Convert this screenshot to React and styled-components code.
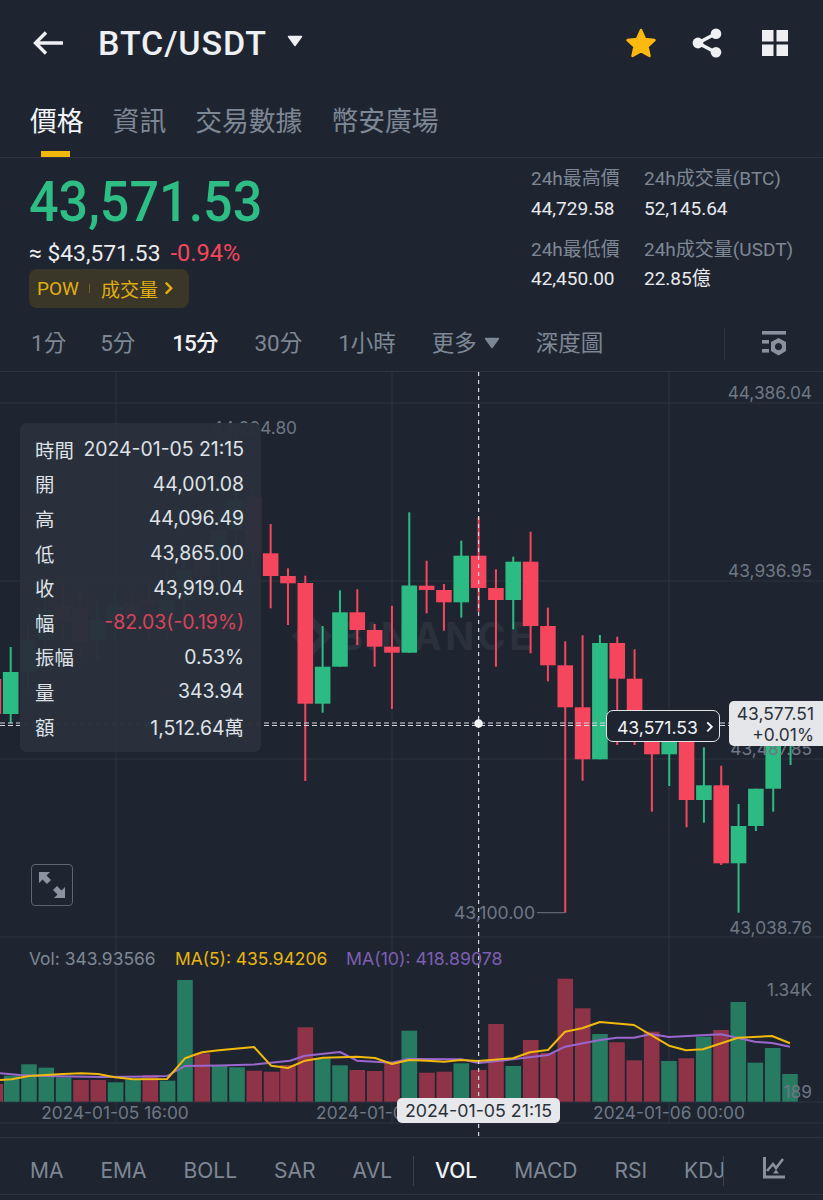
import React from 'react';
import styled, { createGlobalStyle } from 'styled-components';

const UI_FONT = '"Roboto", "Noto Sans CJK TC", sans-serif';
const CHART_FONT = '"Inter", "Noto Sans CJK TC", sans-serif';
const BG = '#1e2530';
const LINE = '#2d343f';
const GREY = '#7e8795';
const GREEN = '#2ebd85';
const RED = '#f6465d';
const YELLOW = '#f0b90b';

const Global = createGlobalStyle`
  html, body { margin: 0; padding: 0; background: ${BG}; }
  * { box-sizing: border-box; }
`;

const Page = styled.div`
  width: 823px;
  height: 1200px;
  background: ${BG};
  color: #eaecef;
  font-family: ${UI_FONT};
  display: flex;
  flex-direction: column;
  overflow: hidden;
`;

const Header = styled.header`
  height: 85px;
  flex: none;
  display: flex;
  align-items: center;
  padding: 0 35px 0 33px;
`;
const Title = styled.h1`
  margin: 0 0 0 35px;
  font-size: 34px;
  font-weight: 500;
  letter-spacing: 0.9px;
  color: #eef0f4;
  white-space: nowrap;
`;
const TitleCaret = styled.span`
  display: flex;
  margin-left: 20px;
  margin-bottom: 4px;
`;
const HeaderActions = styled.div`
  margin-left: auto;
  display: flex;
  align-items: center;
  gap: 40px;
`;
const StarSvg = styled.svg`
  margin-right: -5px;
`;

const Tabs = styled.nav`
  height: 73px;
  flex: none;
  display: flex;
  gap: 29px;
  padding: 18px 0 0 30px;
  border-bottom: 1px solid ${LINE};
`;
const Tab = styled.div`
  position: relative;
  font-size: 26.8px;
  line-height: 38px;
  color: ${(p) => (p.$active ? '#f2f3f5' : GREY)};
  white-space: nowrap;
  ${(p) =>
    p.$active &&
    `&::after {
      content: '';
      position: absolute;
      left: 11px;
      bottom: 0;
      width: 29px;
      height: 6px;
      background: ${YELLOW};
    }`}
`;

const Ticker = styled.section`
  height: 169px;
  flex: none;
  display: flex;
  justify-content: space-between;
`;
const TickerLeft = styled.div`
  padding: 16px 0 0 29px;
  display: flex;
  flex-direction: column;
  align-items: flex-start;
`;
const Price = styled.div`
  font-size: 56px;
  line-height: 56px;
  font-weight: 500;
  color: ${GREEN};
  transform: scaleX(0.93);
  transform-origin: left center;
  white-space: nowrap;
`;
const Fiat = styled.div`
  margin-top: 9px;
  font-size: 22.8px;
  line-height: 28px;
  color: #eaecef;
  white-space: nowrap;
  span {
    color: ${RED};
    margin-left: 10px;
    font-size: 23.6px;
  }
`;
const Badge = styled.div`
  margin-top: 1px;
  width: 160px;
  height: 39px;
  border-radius: 8px;
  background: #3a3628;
  color: #e0ae12;
  font-size: 19px;
  display: flex;
  align-items: center;
  padding-left: 8px;
`;
const BadgeDivider = styled.i`
  width: 1px;
  height: 9px;
  margin: 0 10.5px;
  background: #6f6532;
`;
const BadgeChevron = styled.span`
  display: flex;
  margin-left: 5px;
`;
const StatGrid = styled.div`
  width: 292px;
  padding-top: 7px;
  display: grid;
  grid-template-columns: 113px 1fr;
  grid-auto-rows: 30px;
  white-space: nowrap;
`;
const StatLabel = styled.div`
  font-size: 19px;
  line-height: 28px;
  color: ${GREY};
  ${(p) => p.$lower && 'margin-top: 11px;'}
`;
const StatValue = styled.div`
  font-size: 19px;
  line-height: 28px;
  color: #e8eaee;
  ${(p) => p.$lower && 'margin-top: 10px;'}
`;

const Ranges = styled.div`
  height: 45px;
  flex: none;
  display: flex;
  align-items: center;
  gap: 36px;
  padding: 0 37px 12px 31px;
  border-bottom: 1px solid ${LINE};
`;
const RangeItem = styled.div`
  font-size: 22.5px;
  line-height: 30px;
  color: ${(p) => (p.$active ? '#f2f3f5' : GREY)};
  font-weight: ${(p) => (p.$active ? 500 : 400)};
  letter-spacing: ${(p) => (p.$active ? '-1px' : '0')};
  margin: ${(p) => (p.$active ? '0 1px' : p.$first ? '0 -2px 0 0' : '0')};
  display: flex;
  align-items: center;
  gap: 7px;
  white-space: nowrap;
`;
const RangeTools = styled.div`
  margin: 1px 0 0 auto;
  display: flex;
  align-items: center;
  gap: 37px;
`;
const VDivider = styled.i`
  width: 1px;
  height: 32px;
  background: ${LINE};
  flex: none;
`;

const Chart = styled.div`
  position: relative;
  height: 765px;
  flex: none;
`;
const ChartSvg = styled.svg`
  display: block;
  width: 823px;
  height: 765px;
  text {
    font-family: ${CHART_FONT};
  }
`;
const Tooltip = styled.div`
  position: absolute;
  left: 20px;
  top: 51px;
  width: 241px;
  height: 329px;
  border-radius: 7px;
  background: rgba(42, 49, 60, 0.98);
  padding: 9px 17px 0 15px;
  font-family: ${CHART_FONT};
  font-size: 19.4px;
`;
const TipRow = styled.div`
  height: 34.6px;
  display: flex;
  justify-content: space-between;
  align-items: center;
  color: #dfe2e7;
  white-space: nowrap;
`;
const TipValue = styled.span`
  color: ${(p) => (p.$red ? '#d9435b' : '#dfe2e7')};
`;
const PriceTag = styled.div`
  position: absolute;
  left: 606px;
  top: 338px;
  width: 114px;
  height: 32px;
  border: 1px solid #e3e5e8;
  border-radius: 7px;
  background: #1e2530;
  color: #f2f3f5;
  font-family: ${CHART_FONT};
  font-size: 17.6px;
  display: flex;
  align-items: center;
  justify-content: space-between;
  padding: 2px 5px 0 10px;
`;
const AxisTag = styled.div`
  position: absolute;
  left: 729px;
  top: 329px;
  width: 94px;
  height: 45px;
  border-radius: 5px 0 0 5px;
  background: #e4e6ea;
  color: #2b3139;
  font-family: ${CHART_FONT};
  font-size: 17.4px;
  line-height: 21px;
  text-align: right;
  padding: 2px 9px 0 0;
`;
const TimeTag = styled.div`
  position: absolute;
  left: 397px;
  top: 726px;
  width: 163px;
  height: 25px;
  border-radius: 5px;
  background: #e6e8ec;
  color: #2b3139;
  font-family: ${CHART_FONT};
  font-size: 17.8px;
  line-height: 26px;
  text-align: center;
  white-space: nowrap;
`;
const ExpandButton = styled.div`
  position: absolute;
  left: 31px;
  top: 492px;
  width: 42px;
  height: 42px;
  border: 1px solid #5e6673;
  border-radius: 4px;
  display: flex;
  align-items: center;
  justify-content: center;
`;

const Indicators = styled.div`
  height: 58px;
  flex: none;
  border-top: 1px solid ${LINE};
  border-bottom: 1px solid ${LINE};
  display: flex;
  align-items: center;
  padding: 10px 0 0 30px;
  font-family: ${CHART_FONT};
`;
const IndicatorScroll = styled.div`
  width: 694px;
  flex: none;
  display: flex;
  align-items: center;
  gap: 37px;
  overflow: hidden;
  height: 30px;
  border-right: 1px solid #3a414d;
`;
const Indicator = styled.div`
  font-size: 21px;
  line-height: 30px;
  color: ${(p) => (p.$active ? '#f2f3f5' : GREY)};
  font-weight: ${(p) => (p.$active ? 500 : 400)};
  white-space: nowrap;
`;
const IndicatorDivider = styled.i`
  width: 1px;
  height: 30px;
  flex: none;
  margin: 0 -16px;
  background: #3a414d;
`;
const IndicatorTool = styled.div`
  margin: -6px 0 0 39px;
  display: flex;
`;

const X0 = 478.6;
const P = 17.33;
const cx = (k) => X0 + P * k;
// [index, bodyTop, bodyBottom, wickTop, wickBottom, up?]
const CANDLES = [
  [-28, 679, 714, 665, 728, 0],
  [-27, 672, 714, 647, 723, 1],
  [-26, 640, 672, 625, 690, 1],
  [-25, 610, 640, 590, 655, 1],
  [-24, 606, 622, 585, 640, 0],
  [-23, 607, 642, 590, 660, 0],
  [-22, 620, 640, 600, 660, 1],
  [-21, 605, 622, 592, 645, 1],
  [-20, 603, 616, 590, 630, 0],
  [-19, 600, 606, 585, 640, 0],
  [-18, 600, 620, 570, 640, 1],
  [-17, 570, 600, 550, 620, 1],
  [-16, 560, 575, 540, 600, 0],
  [-15, 530, 560, 515, 580, 1],
  [-14, 500, 530, 490, 560, 1],
  [-13, 497, 553, 490, 570, 0],
  [-12, 553.3, 576, 524, 608.3, 0],
  [-11, 576, 583.3, 568.3, 625, 0],
  [-10, 583, 703.7, 575.7, 781, 0],
  [-9, 666.7, 703.7, 626, 712.7, 1],
  [-8, 612.3, 666.7, 590.3, 666.7, 1],
  [-7, 612.3, 630, 589.3, 645, 0],
  [-6, 630, 646.7, 624, 666.7, 0],
  [-5, 646.7, 652.7, 605.7, 709, 0],
  [-4, 585.5, 652.7, 512.3, 652.7, 1],
  [-3, 585.7, 590, 560.7, 613.3, 0],
  [-2, 590, 602.3, 584, 630.7, 0],
  [-1, 555.7, 602.3, 540.7, 617.7, 1],
  [0, 555.7, 588, 517.3, 611.7, 0],
  [1, 588, 600, 569.3, 666.7, 0],
  [2, 561.7, 600, 556.7, 629.3, 1],
  [3, 561.7, 626, 531.7, 653.3, 0],
  [4, 626, 665.3, 607.7, 681.3, 0],
  [5, 665.3, 707.3, 641.3, 912.7, 0],
  [6, 707.3, 759.3, 635.3, 780.7, 0],
  [7, 643, 759.3, 635, 759.3, 1],
  [8, 643, 678.7, 636.7, 745, 0],
  [9, 678.7, 735, 649.3, 745, 0],
  [10, 725, 754.3, 715, 811.7, 0],
  [11, 725, 754.3, 715, 786, 1],
  [12, 725, 800, 715, 827.3, 0],
  [13, 785.3, 800, 747.3, 822.7, 1],
  [14, 785.3, 863.3, 765.7, 865, 0],
  [15, 826, 863.3, 804, 912.7, 1],
  [16, 788.7, 826, 788.7, 831, 1],
  [17, 745, 788.7, 735, 811.7, 1],
  [18, 735, 745, 735, 765, 1],
];

// [centre x, top of bar, up?]
const VOLUMES = [
  [-4.7, 1084, 0], [11.7, 1075.7, 1], [29, 1064.3, 1], [46.3, 1067.7, 1], [63.6, 1077.3, 1],
  [81, 1080, 0], [98.3, 1080, 0], [115.6, 1082.3, 1], [133, 1079.3, 1], [150.3, 1075, 0],
  [167.6, 1080.7, 1], [185, 980, 1], [202.3, 1053.3, 0], [219.6, 1066, 1], [237, 1067.3, 1],
  [254.3, 1070.7, 0], [271.6, 1071.7, 0], [288, 1065, 0], [305.3, 1027.3, 0], [322.7, 1058.3, 1],
  [340, 1065.3, 1], [357.3, 1070, 0], [374.7, 1071, 0], [392, 1061.7, 0], [409.3, 1030.7, 1],
  [427, 1072.7, 0], [444.3, 1071.7, 0], [461.3, 1063.3, 1], [478.7, 1070, 0], [496, 1024, 0],
  [513.3, 1066, 1], [530.7, 1040, 0], [548, 1053, 0], [565.3, 978.7, 0], [582.7, 1008.3, 0],
  [600, 1034, 1], [617, 1042.3, 0], [634.3, 1060.3, 0], [651.7, 1031.7, 0], [669, 1061, 1],
  [686.3, 1058.3, 0], [703.7, 1036.7, 1], [721, 1030, 0], [738.3, 1002, 1], [755.3, 1062.7, 1],
  [772.7, 1048, 1], [790, 1074, 1],
];

const PURPLE =
  '0,1073.3 20,1075 46,1076 100,1077 150,1076.5 167,1076 185,1066 220,1065.5 254,1064.5 290,1060.7 305,1055.7 340,1052 357,1060.7 392,1062.7 409,1059 461,1059.3 478.7,1063 513,1059.3 548,1055 565,1046.7 600,1040 617,1037.7 634,1037.7 651,1034 669,1037 721,1034.3 755,1041.7 772,1043 790,1046.7';
const ORANGE =
  '0,1080 11.7,1079.3 29,1076 63,1074 81,1073.3 98,1074 115,1077.3 133,1079.3 167,1079 185,1058.3 202,1052.3 219,1050.3 254,1047 271,1065.7 288,1068 305,1060.7 323,1057.7 357,1056.7 375,1058 392,1064 409,1060 427,1060.7 444,1061.7 461,1060 478,1061 513,1058.3 530,1052.3 548,1050 565,1031.7 582,1028.3 600,1022 634,1025 669,1045.7 686,1050.3 703,1049.3 738,1037.7 772,1036 790,1043.3';

const StarIcon = () => (
  <StarSvg width="32" height="30" viewBox="0 0 32 30">
    <path
      d="M16 2 L20 11 L29.5 12 L22.5 18.5 L24.5 28 L16 23.2 L7.5 28 L9.5 18.5 L2.5 12 L12 11 Z"
      fill="#fdb90f"
      stroke="#fdb90f"
      strokeWidth="2.5"
      strokeLinejoin="round"
    />
  </StarSvg>
);
const ShareIcon = () => (
  <svg width="30" height="30" viewBox="0 0 30 30">
    <path d="M6 15 L24 5.5 M6 15 L24 24.5" stroke="#eef0f4" strokeWidth="3.6" fill="none" />
    <circle cx="6" cy="15" r="5.4" fill="#eef0f4" />
    <circle cx="24" cy="5.7" r="5.3" fill="#eef0f4" />
    <circle cx="24" cy="24.3" r="5.3" fill="#eef0f4" />
  </svg>
);
const GridIcon = () => (
  <svg width="26" height="26" viewBox="0 0 26 26" fill="#eef0f4">
    <rect x="0" y="0" width="11.5" height="11.5" />
    <rect x="14.5" y="0" width="11.5" height="11.5" />
    <rect x="0" y="14.5" width="11.5" height="11.5" />
    <rect x="14.5" y="14.5" width="11.5" height="11.5" />
  </svg>
);
const BackIcon = () => (
  <svg width="30" height="26" viewBox="0 0 30 26" fill="none">
    <path d="M2 13 H30 M13 2.5 L2.5 13 L13 23.5" stroke="#eef0f4" strokeWidth="3.4" />
  </svg>
);
const Caret = ({ color = '#eef0f4' }) => (
  <svg width="16" height="12" viewBox="0 0 16 12">
    <path d="M1.5 1.5 H14.5 L8 10.5 Z" fill={color} stroke={color} strokeWidth="1.5" strokeLinejoin="round" />
  </svg>
);
const SettingsIcon = () => (
  <svg width="24" height="26" viewBox="0 0 24 26" fill="#8a919e">
    <rect x="0" y="0" width="24" height="3.6" />
    <rect x="0" y="9" width="7" height="3.6" />
    <rect x="0" y="18" width="7" height="3.6" />
    <path
      fillRule="evenodd"
      d="M16.5 7 L24 11 V20 L16.5 24.5 L9 20 V11 Z M16.5 12 a3.6 3.6 0 1 0 0.01 0 Z"
    />
  </svg>
);
const ExpandIcon = () => (
  <svg width="28" height="28" viewBox="0 0 28 28" fill="#8b92a0">
    <path d="M1 1 H12 L8.5 4.5 L13 9 L9 13 L4.5 8.5 L1 12 Z" />
    <path d="M27 27 H16 L19.5 23.5 L15 19 L19 15 L23.5 19.5 L27 16 Z" />
  </svg>
);
const IndicatorIcon = () => (
  <svg width="22" height="22" viewBox="0 0 22 22" fill="none">
    <path d="M1.5 0 V20 H22" stroke="#8a919e" strokeWidth="3" />
    <path d="M4 14 L10 7 L13 11 L20 2" stroke="#8a919e" strokeWidth="2.6" />
    <path d="M10 16.5 H16 L13 12.5 Z" fill="#8a919e" />
  </svg>
);
const Chevron = ({ color, size = 12 }) => (
  <svg width={size} height={size * 1.3} viewBox="0 0 10 13" fill="none">
    <path d="M2.5 1.5 L7.5 6.5 L2.5 11.5" stroke={color} strokeWidth="2.2" />
  </svg>
);

const TIP_ROWS = [
  ['時間', '2024-01-05 21:15'],
  ['開', '44,001.08'],
  ['高', '44,096.49'],
  ['低', '43,865.00'],
  ['收', '43,919.04'],
  ['幅', '-82.03(-0.19%)', true],
  ['振幅', '0.53%'],
  ['量', '343.94'],
  ['額', '1,512.64萬'],
];

const AxisLabel = ({ x, y, children, anchor = 'end', fill = '#6f7785', size = 17.3 }) => (
  <text x={x} y={y} textAnchor={anchor} fontSize={size} fill={fill}>
    {children}
  </text>
);

const ChartDrawing = () => (
  <ChartSvg viewBox="0 372 823 765">
    {[403, 581, 759, 937, 1123].map((y) => (
      <line key={y} x1="0" x2="823" y1={y} y2={y} stroke={LINE} />
    ))}
    {[116, 392, 669].map((x) => (
      <line key={x} x1={x} x2={x} y1="372" y2="1123" stroke={LINE} />
    ))}
    <line x1="0" x2="823" y1="1102" y2="1102" stroke={LINE} />

    <g fill="#2b313c">
      <path d="M292 636 L312 616 L332 636 L312 656 Z M304 636 L312 628 L320 636 L312 644 Z" fillRule="evenodd" />
      <text x="338" y="650" fontSize="38" fontWeight="700" letterSpacing="3.5">
        BINANCE
      </text>
    </g>

    {CANDLES.map(([k, bt, bb, wt, wb, up]) => {
      const c = up ? '#2dbb84' : '#f6465d';
      const x = cx(k);
      return (
        <g key={k}>
          <rect x={x - 1} y={wt} width="2" height={wb - wt} fill={c} />
          <rect x={x - 7.8} y={bt} width="15.6" height={bb - bt} fill={c} />
        </g>
      );
    })}

    {VOLUMES.map(([x, top, up]) => (
      <rect
        key={x}
        x={x - 7.8}
        y={top}
        width="15.6"
        height={1101.7 - top}
        fill={up ? '#267b61' : '#8f3348'}
      />
    ))}
    <polyline points={PURPLE} fill="none" stroke="#9a67cf" strokeWidth="2" strokeLinejoin="round" />
    <polyline points={ORANGE} fill="none" stroke="#f0b90b" strokeWidth="2" strokeLinejoin="round" />

    <line x1="478.6" x2="478.6" y1="372" y2="1137" stroke="#d5d8dc" strokeWidth="1.2" strokeDasharray="4 4" />
    <line x1="0" x2="823" y1="723" y2="723" stroke="#d5d8dc" strokeWidth="1.2" strokeDasharray="5 3" />
    <line x1="0" x2="823" y1="725.5" y2="725.5" stroke="#d5d8dc" strokeWidth="1.2" strokeDasharray="5 3" />
    <circle cx="478.6" cy="723.5" r="4.2" fill="#f2f3f5" />

    <AxisLabel x="812" y="399">44,386.04</AxisLabel>
    <AxisLabel x="812" y="577">43,936.95</AxisLabel>
    <AxisLabel x="812" y="755">43,487.85</AxisLabel>
    <AxisLabel x="812" y="934">43,038.76</AxisLabel>
    <AxisLabel x="297" y="434">44,204.80</AxisLabel>
    <AxisLabel x="535" y="919" size={17.6}>43,100.00</AxisLabel>
    <line x1="537" x2="565" y1="912.7" y2="912.7" stroke="#6f7785" />

    <AxisLabel x="29" y="965" anchor="start" fill="#7e8795" size={17.4}>Vol: 343.93566</AxisLabel>
    <AxisLabel x="175" y="965" anchor="start" fill="#e9b50f" size={17.4}>MA(5): 435.94206</AxisLabel>
    <AxisLabel x="346" y="965" anchor="start" fill="#7d5fb0" size={17.7}>MA(10): 418.89078</AxisLabel>
    <AxisLabel x="812" y="996">1.34K</AxisLabel>
    <AxisLabel x="812" y="1098">189</AxisLabel>
    <AxisLabel x="115" y="1119" anchor="middle">2024-01-05 16:00</AxisLabel>
    <AxisLabel x="392" y="1119" anchor="middle">2024-01-06 00:00</AxisLabel>
    <AxisLabel x="669" y="1119" anchor="middle">2024-01-06 00:00</AxisLabel>
  </ChartSvg>
);

export default function App() {
  return (
    <Page>
      <Global />
      <Header>
        <BackIcon />
        <Title>BTC/USDT</Title>
        <TitleCaret>
          <Caret />
        </TitleCaret>
        <HeaderActions>
          <StarIcon />
          <ShareIcon />
          <GridIcon />
        </HeaderActions>
      </Header>

      <Tabs>
        <Tab $active>價格</Tab>
        <Tab>資訊</Tab>
        <Tab>交易數據</Tab>
        <Tab>幣安廣場</Tab>
      </Tabs>

      <Ticker>
        <TickerLeft>
          <Price>43,571.53</Price>
          <Fiat>
            ≈ $43,571.53<span>-0.94%</span>
          </Fiat>
          <Badge>
            POW
            <BadgeDivider />
            成交量
            <BadgeChevron>
              <Chevron color="#e0ae12" size={11} />
            </BadgeChevron>
          </Badge>
        </TickerLeft>
        <StatGrid>
          <StatLabel>24h最高價</StatLabel>
          <StatLabel>24h成交量(BTC)</StatLabel>
          <StatValue>44,729.58</StatValue>
          <StatValue>52,145.64</StatValue>
          <StatLabel $lower>24h最低價</StatLabel>
          <StatLabel $lower>24h成交量(USDT)</StatLabel>
          <StatValue $lower>42,450.00</StatValue>
          <StatValue $lower>22.85億</StatValue>
        </StatGrid>
      </Ticker>

      <Ranges>
        <RangeItem $first>1分</RangeItem>
        <RangeItem>5分</RangeItem>
        <RangeItem $active>15分</RangeItem>
        <RangeItem>30分</RangeItem>
        <RangeItem>1小時</RangeItem>
        <RangeItem>
          更多
          <Caret color="#7e8795" />
        </RangeItem>
        <RangeItem>深度圖</RangeItem>
        <RangeTools>
          <VDivider />
          <SettingsIcon />
        </RangeTools>
      </Ranges>

      <Chart>
        <ChartDrawing />
        <Tooltip>
          {TIP_ROWS.map(([label, value, red]) => (
            <TipRow key={label}>
              <span>{label}</span>
              <TipValue $red={red}>{value}</TipValue>
            </TipRow>
          ))}
        </Tooltip>
        <PriceTag>
          43,571.53
          <Chevron color="#f2f3f5" size={9} />
        </PriceTag>
        <AxisTag>
          43,577.51
          <br />
          +0.01%
        </AxisTag>
        <TimeTag>2024-01-05 21:15</TimeTag>
        <ExpandButton>
          <ExpandIcon />
        </ExpandButton>
      </Chart>

      <Indicators>
        <IndicatorScroll>
          <Indicator>MA</Indicator>
          <Indicator>EMA</Indicator>
          <Indicator>BOLL</Indicator>
          <Indicator>SAR</Indicator>
          <Indicator>AVL</Indicator>
          <IndicatorDivider />
          <Indicator $active>VOL</Indicator>
          <Indicator>MACD</Indicator>
          <Indicator>RSI</Indicator>
          <Indicator>KDJ</Indicator>
        </IndicatorScroll>
        <IndicatorTool>
          <IndicatorIcon />
        </IndicatorTool>
      </Indicators>
    </Page>
  );
}
